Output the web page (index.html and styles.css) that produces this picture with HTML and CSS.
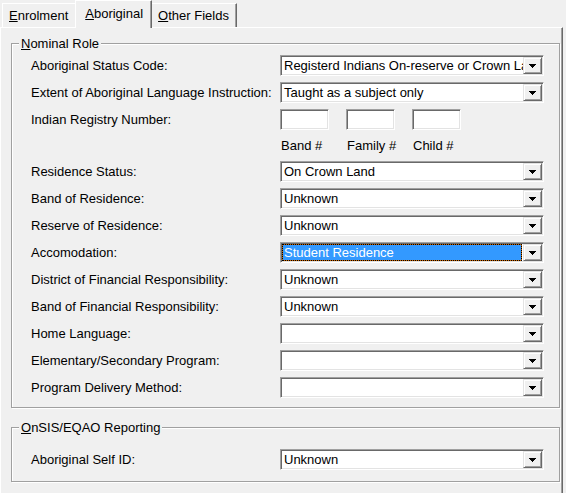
FILE: index.html
```html
<!DOCTYPE html>
<html lang="en">
<head>
<meta charset="utf-8">
<title>Aboriginal</title>
<link rel="stylesheet" href="styles.css">
</head>
<body>
<div class="tabbar">
  <div class="tab tab-first"><span><u>E</u>nrolment</span></div>
  <div class="tab tab-active"><span><u>A</u>boriginal</span></div>
  <div class="tab tab-last"><span><u>O</u>ther Fields</span></div>
</div>
<div class="panel">
  <div class="group group-nominal">
    <div class="group-title"><u>N</u>ominal Role</div>
    <div class="form form-nominal">
      <div class="label">Aboriginal Status Code:</div>
      <div class="combo"><span class="value">Registerd Indians On-reserve or Crown Land</span><span class="btn"><svg width="7" height="4" viewBox="0 0 7 4"><path d="M0 0h7v1H0zM1 1h5v1H1zM2 2h3v1H2zM3 3h1v1H3z"/></svg></span></div>

      <div class="label">Extent of Aboriginal Language Instruction:</div>
      <div class="combo"><span class="value">Taught as a subject only</span><span class="btn"><svg width="7" height="4" viewBox="0 0 7 4"><path d="M0 0h7v1H0zM1 1h5v1H1zM2 2h3v1H2zM3 3h1v1H3z"/></svg></span></div>

      <div class="label">Indian Registry Number:</div>
      <div class="boxes">
        <div class="textbox"></div>
        <div class="textbox"></div>
        <div class="textbox"></div>
      </div>

      <div class="label"></div>
      <div class="boxes box-captions">
        <span class="caption">Band #</span>
        <span class="caption">Family #</span>
        <span class="caption">Child #</span>
      </div>

      <div class="label">Residence Status:</div>
      <div class="combo"><span class="value">On Crown Land</span><span class="btn"><svg width="7" height="4" viewBox="0 0 7 4"><path d="M0 0h7v1H0zM1 1h5v1H1zM2 2h3v1H2zM3 3h1v1H3z"/></svg></span></div>

      <div class="label">Band of Residence:</div>
      <div class="combo"><span class="value">Unknown</span><span class="btn"><svg width="7" height="4" viewBox="0 0 7 4"><path d="M0 0h7v1H0zM1 1h5v1H1zM2 2h3v1H2zM3 3h1v1H3z"/></svg></span></div>

      <div class="label">Reserve of Residence:</div>
      <div class="combo"><span class="value">Unknown</span><span class="btn"><svg width="7" height="4" viewBox="0 0 7 4"><path d="M0 0h7v1H0zM1 1h5v1H1zM2 2h3v1H2zM3 3h1v1H3z"/></svg></span></div>

      <div class="label">Accomodation:</div>
      <div class="combo"><span class="value selected">Student Residence</span><span class="btn"><svg width="7" height="4" viewBox="0 0 7 4"><path d="M0 0h7v1H0zM1 1h5v1H1zM2 2h3v1H2zM3 3h1v1H3z"/></svg></span></div>

      <div class="label">District of Financial Responsibility:</div>
      <div class="combo"><span class="value">Unknown</span><span class="btn"><svg width="7" height="4" viewBox="0 0 7 4"><path d="M0 0h7v1H0zM1 1h5v1H1zM2 2h3v1H2zM3 3h1v1H3z"/></svg></span></div>

      <div class="label">Band of Financial Responsibility:</div>
      <div class="combo"><span class="value">Unknown</span><span class="btn"><svg width="7" height="4" viewBox="0 0 7 4"><path d="M0 0h7v1H0zM1 1h5v1H1zM2 2h3v1H2zM3 3h1v1H3z"/></svg></span></div>

      <div class="label">Home Language:</div>
      <div class="combo"><span class="value"></span><span class="btn"><svg width="7" height="4" viewBox="0 0 7 4"><path d="M0 0h7v1H0zM1 1h5v1H1zM2 2h3v1H2zM3 3h1v1H3z"/></svg></span></div>

      <div class="label">Elementary/Secondary Program:</div>
      <div class="combo"><span class="value"></span><span class="btn"><svg width="7" height="4" viewBox="0 0 7 4"><path d="M0 0h7v1H0zM1 1h5v1H1zM2 2h3v1H2zM3 3h1v1H3z"/></svg></span></div>

      <div class="label">Program Delivery Method:</div>
      <div class="combo"><span class="value"></span><span class="btn"><svg width="7" height="4" viewBox="0 0 7 4"><path d="M0 0h7v1H0zM1 1h5v1H1zM2 2h3v1H2zM3 3h1v1H3z"/></svg></span></div>
    </div>
  </div>

  <div class="group group-onsis">
    <div class="group-title"><u>O</u>nSIS/EQAO Reporting</div>
    <div class="form form-onsis">
      <div class="label">Aboriginal Self ID:</div>
      <div class="combo"><span class="value">Unknown</span><span class="btn"><svg width="7" height="4" viewBox="0 0 7 4"><path d="M0 0h7v1H0zM1 1h5v1H1zM2 2h3v1H2zM3 3h1v1H3z"/></svg></span></div>
    </div>
  </div>
</div>
</body>
</html>
```

FILE: styles.css
```css
html, body {
  margin: 0;
  padding: 0;
  overflow: hidden;
}

body {
  background: #f0f0f0;
  color: #000;
  font: 13px/15px "Liberation Sans", Arial, sans-serif;
}

u {
  text-decoration: underline;
  text-underline-offset: 1px;
}

/* ---------- tabs ---------- */
.tabbar {
  display: flex;
  align-items: flex-end;
  height: 27px;
  padding-left: 2px;
}

.tab {
  box-sizing: border-box;
  height: 24px;
  display: flex;
  align-items: center;
  background: #f0f0f0;
  border-top: 1px solid #fff;
  border-left: 1px solid #fff;
  border-right: 1px solid #696969;
  box-shadow: inset -1px 0 0 #a0a0a0;
  white-space: nowrap;
}

.tab-first {
  padding: 0 8px 0 6px;
}

.tab-active {
  position: relative;
  z-index: 1;
  height: 28px;
  margin: 0 -2px -1px -2px;
  padding: 0 8px 2px 9px;
}

.tab-last {
  padding: 0 7px 0 7px;
}

/* ---------- panel ---------- */
.panel {
  box-sizing: border-box;
  width: 563px;
  height: 470px;
  padding: 15px 2px 0 10px;
  border-top: 1px solid #fff;
  border-left: 1px solid #fff;
  border-right: 1px solid #696969;
  box-shadow: inset -1px 0 0 #a0a0a0;
}

/* ---------- group boxes ---------- */
.group {
  box-sizing: border-box;
  width: 549px;
  border: 1px solid #a0a0a0;
  box-shadow: inset 1px 1px 0 #fff, 1px 1px 0 #fff;
}

.group-title {
  width: fit-content;
  margin: -8px 0 0 7px;
  padding: 0 2px;
  background: #f0f0f0;
  line-height: 15px;
  white-space: nowrap;
}

.group-nominal {
  padding-bottom: 9px;
}

.group-onsis {
  margin-top: 19px;
  padding-bottom: 11px;
}

/* ---------- form grid ---------- */
.form {
  display: grid;
  grid-template-columns: 249px 264px;
  row-gap: 6px;
  align-items: center;
  padding-left: 19px;
}

.form-nominal {
  margin-top: 4px;
  grid-template-rows: 21px 21px 21px 19px repeat(9, 21px);
}

.form-onsis {
  margin-top: 14px;
}

.label {
  white-space: nowrap;
  line-height: 15px;
  margin-top: -1px;
}

/* ---------- combo boxes ---------- */
.combo {
  box-sizing: border-box;
  display: flex;
  height: 21px;
  padding: 1px;
  border: 1px solid;
  border-color: #a0a0a0 #fff #fff #a0a0a0;
  box-shadow: inset 1px 1px 0 #696969, inset -1px -1px 0 #e3e3e3;
  background: #fff;
}

.value {
  box-sizing: border-box;
  flex: 1;
  min-width: 0;
  height: 17px;
  padding-left: 2px;
  line-height: 17px;
  white-space: nowrap;
  overflow: hidden;
}

.value.selected {
  margin-right: 1px;
  padding-left: 1px;
  line-height: 15px;
  color: #fff;
  border: 1px dotted #000;
  background: linear-gradient(#3399ff, #3399ff) padding-box, #cc6600;
}

.btn {
  box-sizing: border-box;
  flex: none;
  width: 19px;
  height: 17px;
  display: flex;
  align-items: center;
  justify-content: center;
  padding-top: 1px;
  border: 1px solid;
  border-color: #e3e3e3 #696969 #696969 #e3e3e3;
  box-shadow: inset 1px 1px 0 #fff, inset -1px -1px 0 #a0a0a0;
  background: #f0f0f0;
}

.btn svg {
  display: block;
  fill: #000;
  shape-rendering: crispEdges;
}

/* ---------- registry number boxes ---------- */
.boxes {
  display: flex;
  gap: 17px;
}

.textbox {
  box-sizing: border-box;
  width: 49px;
  height: 21px;
  border: 1px solid;
  border-color: #a0a0a0 #fff #fff #a0a0a0;
  box-shadow: inset 1px 1px 0 #696969, inset -1px -1px 0 #e3e3e3;
  background: #fff;
}

.box-captions {
  padding-left: 1px;
}

.caption {
  width: 49px;
  white-space: nowrap;
}
```
